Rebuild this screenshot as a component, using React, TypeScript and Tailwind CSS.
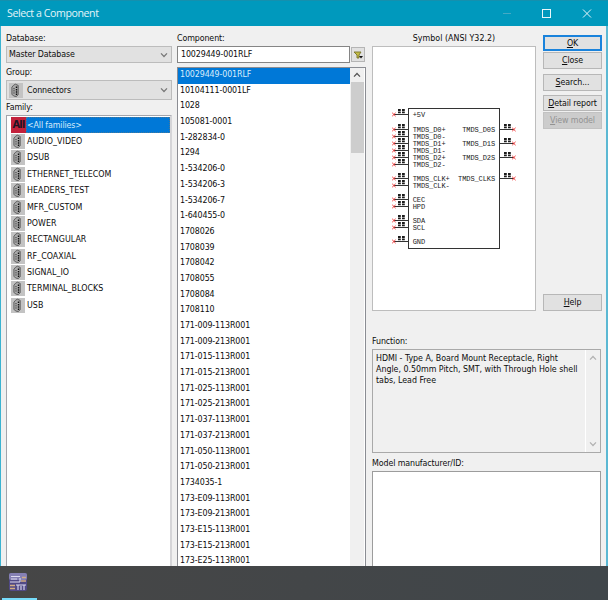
import React from "react";

const families = [
  "AUDIO_VIDEO",
  "DSUB",
  "ETHERNET_TELECOM",
  "HEADERS_TEST",
  "MFR_CUSTOM",
  "POWER",
  "RECTANGULAR",
  "RF_COAXIAL",
  "SIGNAL_IO",
  "TERMINAL_BLOCKS",
  "USB",
];

const components = [
  "10029449-001RLF",
  "10104111-0001LF",
  "1028",
  "105081-0001",
  "1-282834-0",
  "1294",
  "1-534206-0",
  "1-534206-3",
  "1-534206-7",
  "1-640455-0",
  "1708026",
  "1708039",
  "1708042",
  "1708055",
  "1708084",
  "1708110",
  "171-009-113R001",
  "171-009-213R001",
  "171-015-113R001",
  "171-015-213R001",
  "171-025-113R001",
  "171-025-213R001",
  "171-037-113R001",
  "171-037-213R001",
  "171-050-113R001",
  "171-050-213R001",
  "1734035-1",
  "173-E09-113R001",
  "173-E09-213R001",
  "173-E15-113R001",
  "173-E15-213R001",
  "173-E25-113R001",
];

const leftPins = [
  { name: "+5V", y: 114 },
  { name: "TMDS_D0+", y: 129 },
  { name: "TMDS_D0-", y: 136 },
  { name: "TMDS_D1+", y: 143 },
  { name: "TMDS_D1-", y: 150 },
  { name: "TMDS_D2+", y: 157 },
  { name: "TMDS_D2-", y: 164 },
  { name: "TMDS_CLK+", y: 178 },
  { name: "TMDS_CLK-", y: 185 },
  { name: "CEC", y: 199 },
  { name: "HPD", y: 206 },
  { name: "SDA", y: 220 },
  { name: "SCL", y: 227 },
  { name: "GND", y: 241 },
];

const rightPins = [
  { name: "TMDS_D0S", y: 129 },
  { name: "TMDS_D1S", y: 143 },
  { name: "TMDS_D2S", y: 157 },
  { name: "TMDS_CLKS", y: 178 },
];

const Chevron = ({ up, className }: { up?: boolean; className: string }) => (
  <svg viewBox="0 0 8 6" className={className} fill="none" stroke="currentColor" strokeWidth="1.2">
    <path d={up ? "M1 4.7 4 1.5 7 4.7" : "M1 1.3 4 4.5 7 1.3"} />
  </svg>
);

const ConnectorIcon = () => (
  <svg viewBox="0 0 14 15" className="w-[14px] h-[15px] shrink-0">
    <rect width="14" height="15" fill="#c3c3c3" />
    <path
      d="M4.6 2.2 6.4 1.2 9.2 2.4V11.6L7.4 13.6 4.6 13 2.9 11.2V4.2Z"
      fill="#aaa"
      stroke="#4a4a4a"
      strokeWidth="0.8"
    />
    <path d="M5 5v6.5" stroke="#333" strokeWidth="1" strokeDasharray="1.2 1" />
    <path d="M7.5 3.6v8.6" stroke="#0c0c0c" strokeWidth="1.4" strokeDasharray="1.5 0.8" />
  </svg>
);

const Pin = ({ x, y, right }: { x: number; y: number; right?: boolean }) => {
  const end = right ? x + 14 : x;
  const mark = x + 4;
  return (
    <g>
      <path d={`M${x} ${y + 0.5}h14`} stroke="#333" />
      <path
        d={`M${mark} ${y - 4}h2.8M${mark + 4} ${y - 4}h2.8M${mark} ${y - 1.6}h2.8M${mark + 4} ${y - 1.6}h2.8`}
        stroke="#1c1c1c"
        strokeWidth="1.8"
      />
      <path d={`M${end - 1.8} ${y - 1.2}l3.4 3.4M${end + 1.6} ${y - 1.2}l-3.4 3.4`} stroke="#f03a3a" />
    </g>
  );
};

const SymbolPreview = () => (
  <svg
    viewBox="373 47 162 263"
    className="w-[162px] h-[263px] font-['Liberation_Mono',monospace] text-[7px]"
  >
    <rect x="408.5" y="108.5" width="91" height="140" fill="none" stroke="#333" />
    {leftPins.map((pin) => (
      <g key={pin.name}>
        <Pin x={394} y={pin.y} />
        <text x="412.7" y={pin.y + 2.6} fill="#222">
          {pin.name}
        </text>
      </g>
    ))}
    {rightPins.map((pin) => (
      <g key={pin.name}>
        <Pin x={500} y={pin.y} right />
        <text x="495" y={pin.y + 2.6} textAnchor="end" fill="#222">
          {pin.name}
        </text>
      </g>
    ))}
  </svg>
);

const Button = ({ label, className }: { label: string; className: string }) => (
  <button
    className={`w-full shrink-0 flex items-center justify-center whitespace-nowrap ${className}`}
  >
    <span>
      <span className="underline underline-offset-1">{label[0]}</span>
      {label.slice(1)}
    </span>
  </button>
);

const TitleBar = () => (
  <div className="h-[26px] shrink-0 flex items-center bg-[#0099bd] border-t border-[#1590ae] pl-[7px] text-white">
    <span className="grow font-['Open_Sans',sans-serif] [font-stretch:normal] text-[10.6px] leading-none tracking-[-0.42px] text-[#e4f5f9]">
      Select a Component
    </span>
    <svg viewBox="0 0 110 26" className="w-[110px] h-[26px]" fill="none" stroke="#e8f6fa">
      <path d="M5 12.5h8" stroke="#45a9c4" />
      <rect x="44.5" y="8.5" width="8" height="8" />
      <path d="M85 8.5l8 8M93 8.5l-8 8" />
    </svg>
  </div>
);

const TaskBar = () => (
  <div className="h-[34px] shrink-0 flex flex-col justify-between bg-linear-to-r from-[#464646] to-[#40464a] pl-[2px]">
    <svg viewBox="0 0 20 20" className="w-[20px] h-[20px] ml-[6px] mt-[6px]">
      <rect x="1" y="1" width="18" height="18" rx="2" fill="#514a86" />
      <rect x="1" y="1" width="18" height="7" rx="2" fill="#8580b4" />
      <path
        d="M3 4.5h9M3 7h6M2 10h10M12 10V6M10 18v-5M13 18v-4M16 18v-5M8 13h10"
        stroke="#dddaf0"
        strokeWidth="1.1"
        fill="none"
      />
      <path d="M14 5.5h4M13 9h5M2 13.5h5M2 16.5h5" stroke="#d2ad83" strokeWidth="1.3" />
    </svg>
    <div className="w-[35px] h-[2px] bg-[#76dcfa]" />
  </div>
);

export default function App() {
  return (
    <div className="w-[608px] h-[600px] overflow-hidden flex flex-col bg-[#f0f0f0] text-[#0c0c0c] font-['DejaVu_Sans_Condensed','DejaVu_Sans',sans-serif] [font-stretch:condensed] text-[8.8px] leading-[11px] tracking-[-0.1px]">
      <TitleBar />
      <div className="h-[540px] shrink-0 flex border-l border-r-2 border-l-[#3bb3d1] border-r-[#5bb8d3] pl-[5px]">
        {/* database / group / family */}
        <div className="w-[166px] shrink-0 flex flex-col">
          <div className="h-[20px] shrink-0 pt-[7px]">Database:</div>
          <div className="h-[17px] shrink-0 flex items-center justify-between border border-[#bcbcbc] bg-[#e1e1e1] pl-[2px] pr-[3px]">
            <span>Master Database</span>
            <Chevron className="w-[8px] h-[6px] text-[#777]" />
          </div>
          <div className="h-[17px] shrink-0 pt-[4px]">Group:</div>
          <div className="h-[20px] shrink-0 flex items-center border border-[#bcbcbc] bg-[#e1e1e1] pl-[2px] pr-[3px]">
            <ConnectorIcon />
            <span className="grow pl-[4px]">Connectors</span>
            <Chevron className="w-[8px] h-[6px] text-[#777]" />
          </div>
          <div className="h-[15px] shrink-0 pt-[2px]">Family:</div>
          <div className="grow bg-white border border-b-0 border-r-2 border-[#a3a5ac] border-r-[#d5d5d8] pl-[4px] pt-px">
            <div className="h-[16.4px] flex items-center">
              <span className="w-[15px] h-full bg-[#c2213b] text-[#211323] font-bold text-[11px] tracking-[-0.8px] leading-[16px] text-center">
                All
              </span>
              <span className="grow h-[16px] flex items-center bg-[#0078d7] border border-dotted border-[#4a7896] text-[#d9ecfa] tracking-[-0.12px]">
                &lt;All families&gt;
              </span>
            </div>
            {families.map((name) => (
              <div key={name} className="h-[16.38px] flex items-center tracking-[0.04px]">
                <ConnectorIcon />
                <span className="pl-[2px]">{name}</span>
              </div>
            ))}
          </div>
        </div>

        {/* component list */}
        <div className="w-[189px] ml-[5px] shrink-0 flex flex-col">
          <div className="h-[20px] shrink-0 pt-[7px]">Component:</div>
          <div className="h-[17px] shrink-0 flex gap-[1px]">
            <div className="w-[173px] flex items-center bg-white border border-[#858585] pl-[3px]">
              10029449-001RLF
            </div>
            <button className="w-[14px] h-[15px] mt-px flex items-center justify-center bg-[#e1e1e1] border border-[#b5b5b5]">
              <svg viewBox="0 0 10 8" className="w-[10px] h-[8px]">
                <path d="M1 1h7L6 4v3H4V4Z" fill="#c4bd45" stroke="#77732a" strokeWidth="0.9" />
                <path d="M6 5h4L8 7.5Z" fill="#111" />
              </svg>
            </button>
          </div>
          <div className="h-[4px] shrink-0" />
          <div className="grow min-h-0 flex bg-white border border-b-0 border-[#8b8d93]">
            <div className="grow overflow-hidden">
              {components.map((name, i) => (
                <div
                  key={name}
                  className={`h-[15.7px] pl-[2px] pt-px leading-[11px] ${i === 0 ? "bg-[#0078d7] text-[#d9ecfa]" : ""}`}
                >
                  {name}
                </div>
              ))}
            </div>
            <div className="w-[15px] shrink-0 flex flex-col items-center bg-[#f0f0f0] border-r border-white">
              <div className="h-[14px] flex items-center">
                <Chevron up className="w-[8px] h-[6px] text-[#555]" />
              </div>
              <div className="w-[13px] h-[71px] bg-[#cdcdcd]" />
            </div>
          </div>
        </div>

        {/* preview, buttons and description */}
        <div className="w-[230px] ml-[6px] shrink-0 flex flex-col">
          <div className="h-[285px] shrink-0 flex gap-[7px]">
            <div className="w-[164px] shrink-0 flex flex-col">
              <div className="h-[20px] shrink-0 pt-[7px] text-center tracking-[0.03px]">Symbol (ANSI Y32.2)</div>
              <div className="h-[265px] bg-white border border-[#bdbdbd]">
                <SymbolPreview />
              </div>
            </div>
            <div className="w-[59px] shrink-0 flex flex-col pt-[9px]">
              <Button label="OK" className="h-[16px] bg-[#e1e1e1] border-2 border-[#1a83dc]" />
              <Button label="Close" className="h-[17px] mt-px bg-[#e1e1e1] border border-[#b7b7b7]" />
              <Button label="Search..." className="h-[17px] mt-[5px] bg-[#e1e1e1] border border-[#b7b7b7]" />
              <Button label="Detail report" className="h-[16px] mt-[4px] bg-[#e1e1e1] border border-[#b7b7b7]" />
              <Button label="View model" className="h-[17px] mt-px bg-[#cccccc] border border-[#c2c2c2] text-[#929292]" />
              <Button label="Help" className="h-[17px] mt-auto bg-[#e1e1e1] border border-[#b7b7b7]" />
            </div>
          </div>
          <div className="h-[38px] shrink-0 pt-[25px]">Function:</div>
          <div className="h-[104px] w-[229px] shrink-0 flex border border-[#a9a9a9]">
            <p className="grow pl-[3px] pt-[3px] whitespace-nowrap tracking-[-0.02px]">
              HDMI - Type A, Board Mount Receptacle, Right
              <br />
              Angle, 0.50mm Pitch, SMT, with Through Hole shell
              <br />
              tabs, Lead Free
            </p>
            <div className="w-[15px] shrink-0 flex flex-col items-center justify-between border-l border-white py-[5px] text-[#b2b2b2]">
              <Chevron up className="w-[8px] h-[6px]" />
              <Chevron className="w-[8px] h-[6px]" />
            </div>
          </div>
          <div className="h-[18px] shrink-0 pt-[5px]">Model manufacturer/ID:</div>
          <div className="grow w-[229px] bg-white border border-b-0 border-[#9c9c9c]" />
        </div>
      </div>
      <TaskBar />
    </div>
  );
}
